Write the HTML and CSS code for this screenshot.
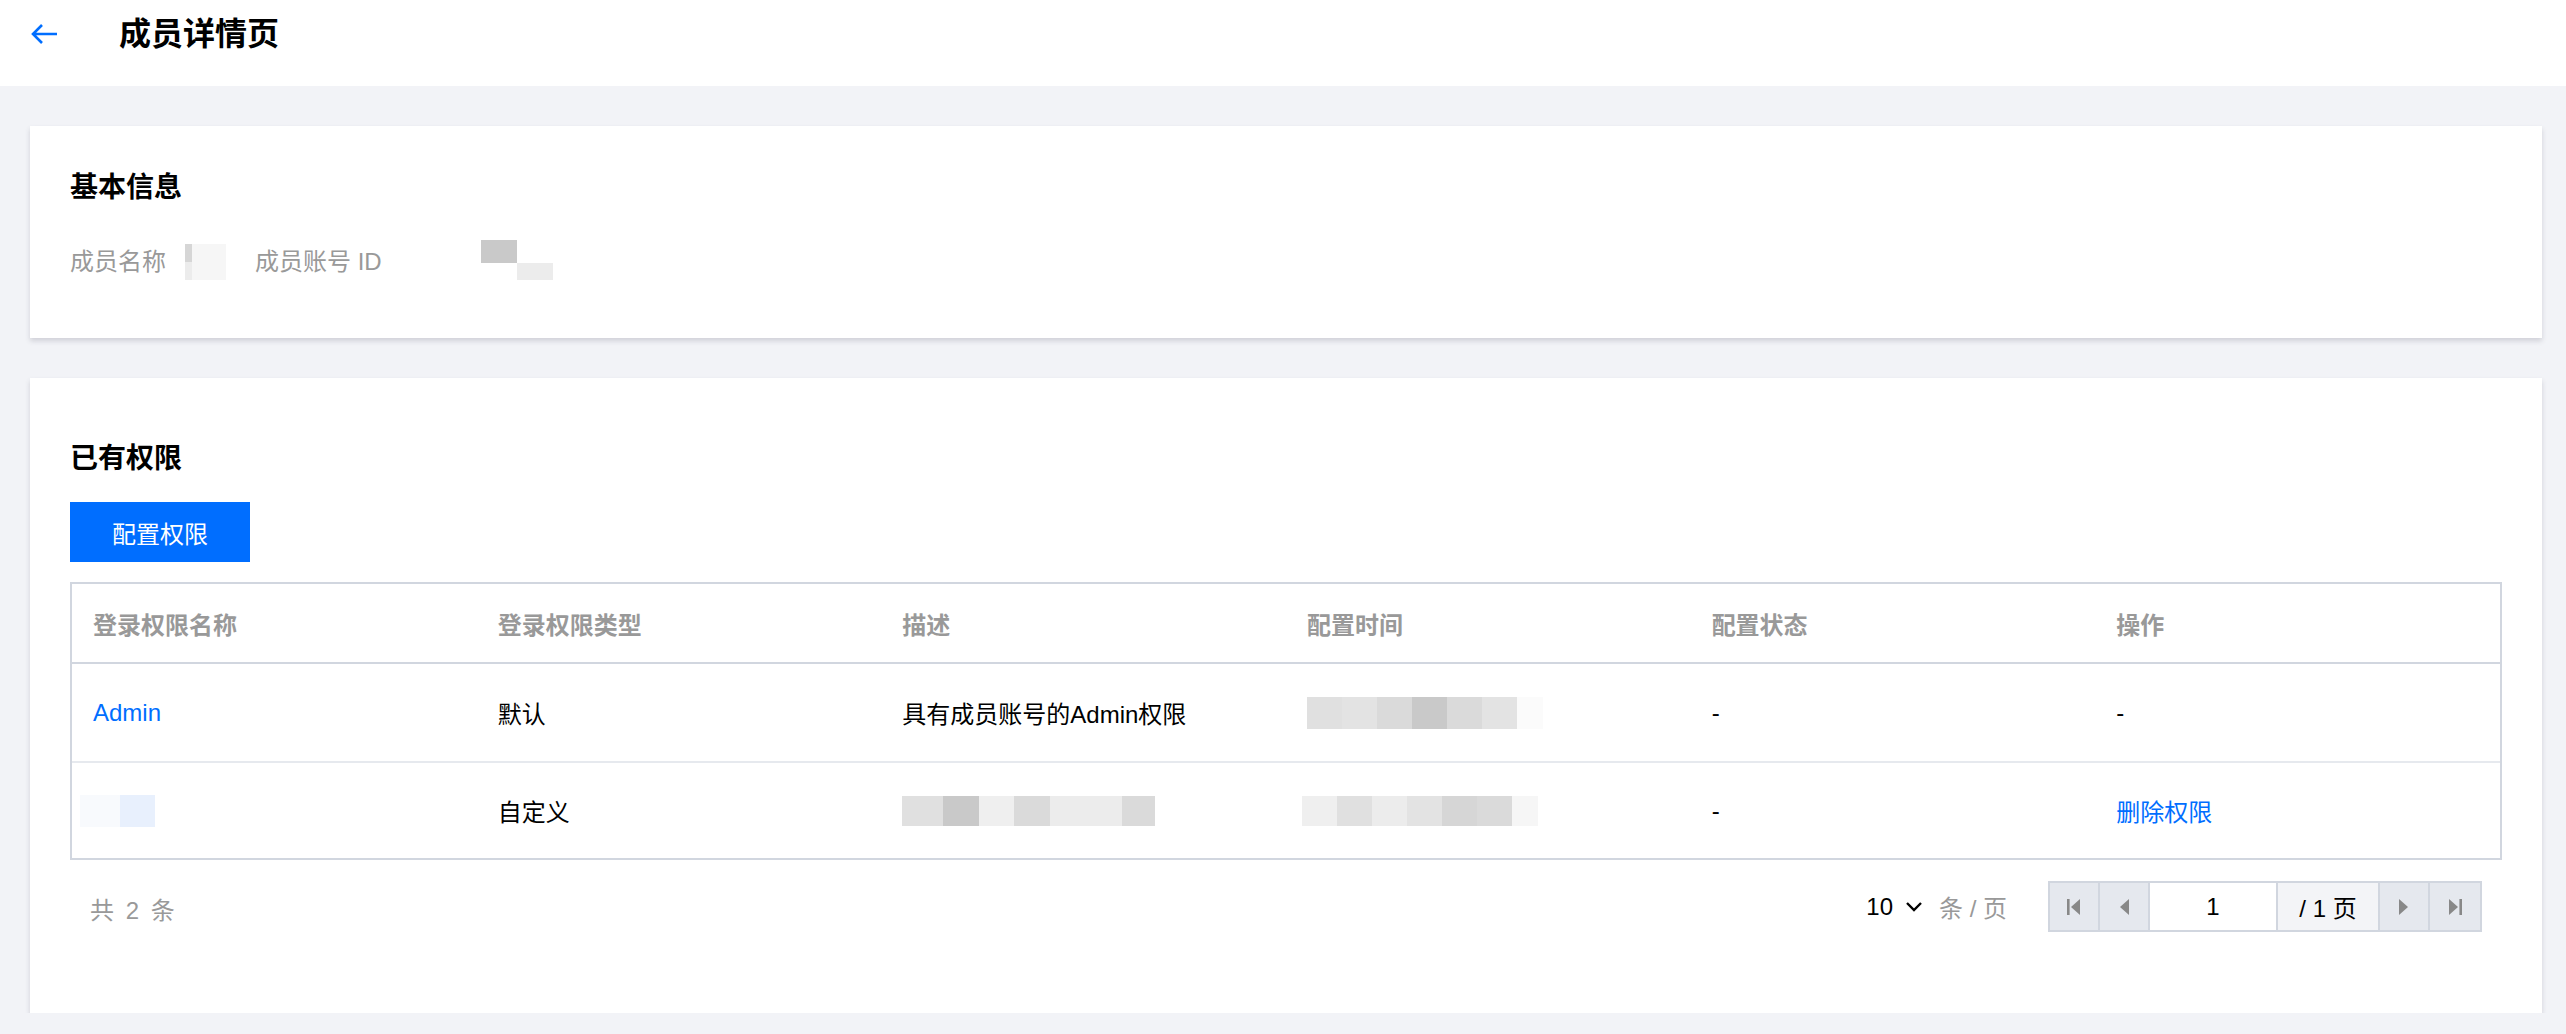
FILE: index.html
```html
<!DOCTYPE html>
<html lang="zh-CN">
<head>
    <meta charset="UTF-8">
    <meta name="viewport" content="width=device-width, initial-scale=1.0">
    <title>成员详情页</title>
    <link rel="stylesheet" href="styles.css">
</head>
<body>
    <div class="header">
        <a class="back" href="#">
            <svg width="28" height="22" viewBox="0 0 28 22">
                <path d="M27 11H3M12 2L3 11L12 20" fill="none" stroke="#006eff" stroke-width="2.6"/>
            </svg>
        </a>
        <h1>成员详情页</h1>
    </div>

    <div class="main">
        <!-- basic info -->
        <div class="card card-info">
            <h2>基本信息</h2>
            <div class="info-row">
                <span class="info-label">成员名称</span>
                <span class="mosaic mosaic-name">
                    <i class="g2"></i><i class="g8"></i>
                    <i class="g6"></i><i class="g8"></i>
                </span>
                <span class="info-label info-label-id">成员账号 ID</span>
                <span class="mosaic mosaic-id">
                    <i class="g1"></i><i class="g0"></i>
                    <i class="g0"></i><i class="g6"></i>
                </span>
            </div>
        </div>

        <!-- permissions -->
        <div class="card card-perm">
            <h2>已有权限</h2>
            <button class="btn-primary">配置权限</button>

            <div class="table-wrap">
                <table>
                    <thead>
                        <tr>
                            <th>登录权限名称</th>
                            <th>登录权限类型</th>
                            <th>描述</th>
                            <th>配置时间</th>
                            <th>配置状态</th>
                            <th>操作</th>
                        </tr>
                    </thead>
                    <tbody>
                        <tr>
                            <td><a class="link" href="#">Admin</a></td>
                            <td>默认</td>
                            <td>具有成员账号的Admin权限</td>
                            <td>
                                <span class="mosaic mosaic-row">
                                    <i class="g4"></i><i class="g5"></i><i class="g3"></i><i class="g1"></i><i class="g3"></i><i class="g5"></i><i class="g9"></i>
                                </span>
                            </td>
                            <td>-</td>
                            <td>-</td>
                        </tr>
                        <tr>
                            <td>
                                <span class="mosaic mosaic-blue"><i class="b1"></i><i class="b2"></i></span>
                            </td>
                            <td>自定义</td>
                            <td>
                                <span class="mosaic mosaic-desc">
                                    <i class="g4"></i><i class="g1"></i><i class="g7"></i><i class="g3"></i><i class="g6"></i><i class="g6"></i><i class="g3"></i>
                                </span>
                            </td>
                            <td>
                                <span class="mosaic mosaic-row mosaic-shift">
                                    <i class="g7"></i><i class="g4"></i><i class="g6"></i><i class="g5"></i><i class="g2"></i><i class="g3"></i><i class="g8"></i>
                                </span>
                            </td>
                            <td>-</td>
                            <td><a class="link" href="#">删除权限</a></td>
                        </tr>
                    </tbody>
                </table>
            </div>

            <div class="pager">
                <span class="pager-total">共 2 条</span>
                <div class="pager-right">
                    <span class="page-size">10
                        <svg width="18" height="12" viewBox="0 0 18 12"><path d="M2 2L9 9L16 2" fill="none" stroke="#000" stroke-width="2.4"/></svg>
                    </span>
                    <span class="page-size-label">条 / 页</span>
                    <div class="pager-box">
                        <span class="pager-btn">
                            <svg width="14" height="16" viewBox="0 0 14 16"><rect x="0" y="0" width="2.6" height="16" fill="#888"/><path d="M13 0V16L4 8Z" fill="#888"/></svg>
                        </span>
                        <span class="pager-btn">
                            <svg width="10" height="16" viewBox="0 0 10 16"><path d="M10 0V16L1 8Z" fill="#888"/></svg>
                        </span>
                        <span class="pager-input">1</span>
                        <span class="pager-count">/ 1 页</span>
                        <span class="pager-btn">
                            <svg width="10" height="16" viewBox="0 0 10 16"><path d="M0 0V16L9 8Z" fill="#888"/></svg>
                        </span>
                        <span class="pager-btn">
                            <svg width="14" height="16" viewBox="0 0 14 16"><path d="M1 0V16L10 8Z" fill="#888"/><rect x="11.4" y="0" width="2.6" height="16" fill="#888"/></svg>
                        </span>
                    </div>
                </div>
            </div>
        </div>
    </div>
</body>
</html>
```

FILE: styles.css
```css
* {
    box-sizing: border-box;
}
body {
    margin: 0;
    background-color: #f2f3f7;
    font-family: "Liberation Sans", "Noto Sans CJK SC", sans-serif;
    font-size: 24px;
    color: #000;
}
.header {
    height: 86px;
    background-color: #fff;
    display: flex;
    align-items: center;
    padding: 0 0 18px 30px;
}
.back {
    display: flex;
    width: 28px;
}
.header h1 {
    margin: 0 0 0 61px;
    font-size: 32px;
    font-weight: bold;
    line-height: 40px;
    color: #000;
}
.main {
    padding: 40px 24px 0 30px;
}
.card {
    background-color: #fff;
    box-shadow: 0 3px 5px rgba(54, 58, 80, 0.18);
}
.card h2 {
    margin: 0;
    font-size: 28px;
    line-height: 40px;
    font-weight: bold;
}
.card-info {
    padding: 42px 40px 58px;
}
.card-perm {
    margin-top: 40px;
    padding: 61px 40px 81px;
}
.info-row {
    margin-top: 36px;
    display: flex;
    align-items: center;
    height: 36px;
}
.info-label {
    color: #999;
    line-height: 36px;
}
.info-label-id {
    margin-left: 29px;
}
.mosaic {
    display: inline-grid;
    vertical-align: middle;
}
.mosaic i {
    display: block;
}
.mosaic-name {
    margin-left: 19px;
    grid-template-columns: 7px 34px;
    grid-template-rows: 18px 18px;
}
.mosaic-id {
    margin-left: 99px;
    margin-top: -4px;
    grid-template-columns: 36px 36px;
    grid-template-rows: 23px 17px;
}
.mosaic-row {
    grid-template-columns: repeat(6, 35px) 26px;
    grid-template-rows: 32px;
}
.mosaic-shift {
    margin-left: -5px;
    grid-template-rows: 30px;
}
.mosaic-desc {
    grid-template-columns: 41px 36px 35px 36px 36px 36px 33px;
    grid-template-rows: 30px;
}
.mosaic-blue {
    margin-left: -13px;
    grid-template-columns: 40px 35px;
    grid-template-rows: 32px;
}
.g0 { background-color: #fff; }
.g1 { background-color: #c9c9c9; }
.g2 { background-color: #d6d6d6; }
.g3 { background-color: #dadada; }
.g4 { background-color: #e0e0e0; }
.g5 { background-color: #e3e3e3; }
.g6 { background-color: #ececec; }
.g7 { background-color: #efefef; }
.g8 { background-color: #f6f6f6; }
.g9 { background-color: #fbfbfb; }
.b1 { background-color: #f8fafd; }
.b2 { background-color: #e8f0fd; }
.btn-primary {
    display: block;
    margin-top: 23px;
    width: 180px;
    height: 60px;
    border: none;
    background-color: #006eff;
    color: #fff;
    font-family: inherit;
    font-size: 24px;
    cursor: pointer;
}
.table-wrap {
    margin-top: 20px;
    border: 2px solid #d1d6df;
}
table {
    width: 100%;
    table-layout: fixed;
    border-collapse: separate;
    border-spacing: 0;
}
th, td {
    text-align: left;
    padding: 0 21px;
    font-weight: normal;
}
th {
    height: 80px;
    color: #999;
    font-weight: bold;
    border-bottom: 2px solid #d1d6df;
}
td {
    height: 97px;
}
tbody tr + tr td {
    border-top: 2px solid #e6e9ee;
}
.link {
    color: #006eff;
    text-decoration: none;
}
.pager {
    margin-top: 21px;
    display: flex;
    align-items: center;
    justify-content: space-between;
    padding: 0 20px;
    height: 51px;
}
.pager-total {
    color: #999;
    word-spacing: 5px;
    margin-top: 4px;
}
.pager-right {
    display: flex;
    align-items: center;
}
.page-size {
    display: flex;
    align-items: center;
    gap: 12px;
}
.page-size-label {
    color: #999;
    margin-left: 16px;
}
.pager-box {
    margin-left: 41px;
    display: flex;
    height: 51px;
    border: 2px solid #d1d6df;
}
.pager-btn {
    width: 50px;
    display: flex;
    align-items: center;
    justify-content: center;
    background-color: #e5e8ee;
    border-right: 2px solid #d1d6df;
}
.pager-btn:last-child {
    border-right: none;
}
.pager-input {
    width: 128px;
    display: flex;
    align-items: center;
    justify-content: center;
    background-color: #fff;
    border-right: 2px solid #d1d6df;
}
.pager-count {
    width: 102px;
    display: flex;
    align-items: center;
    justify-content: center;
    background-color: #f3f4f7;
    border-right: 2px solid #d1d6df;
}
```
